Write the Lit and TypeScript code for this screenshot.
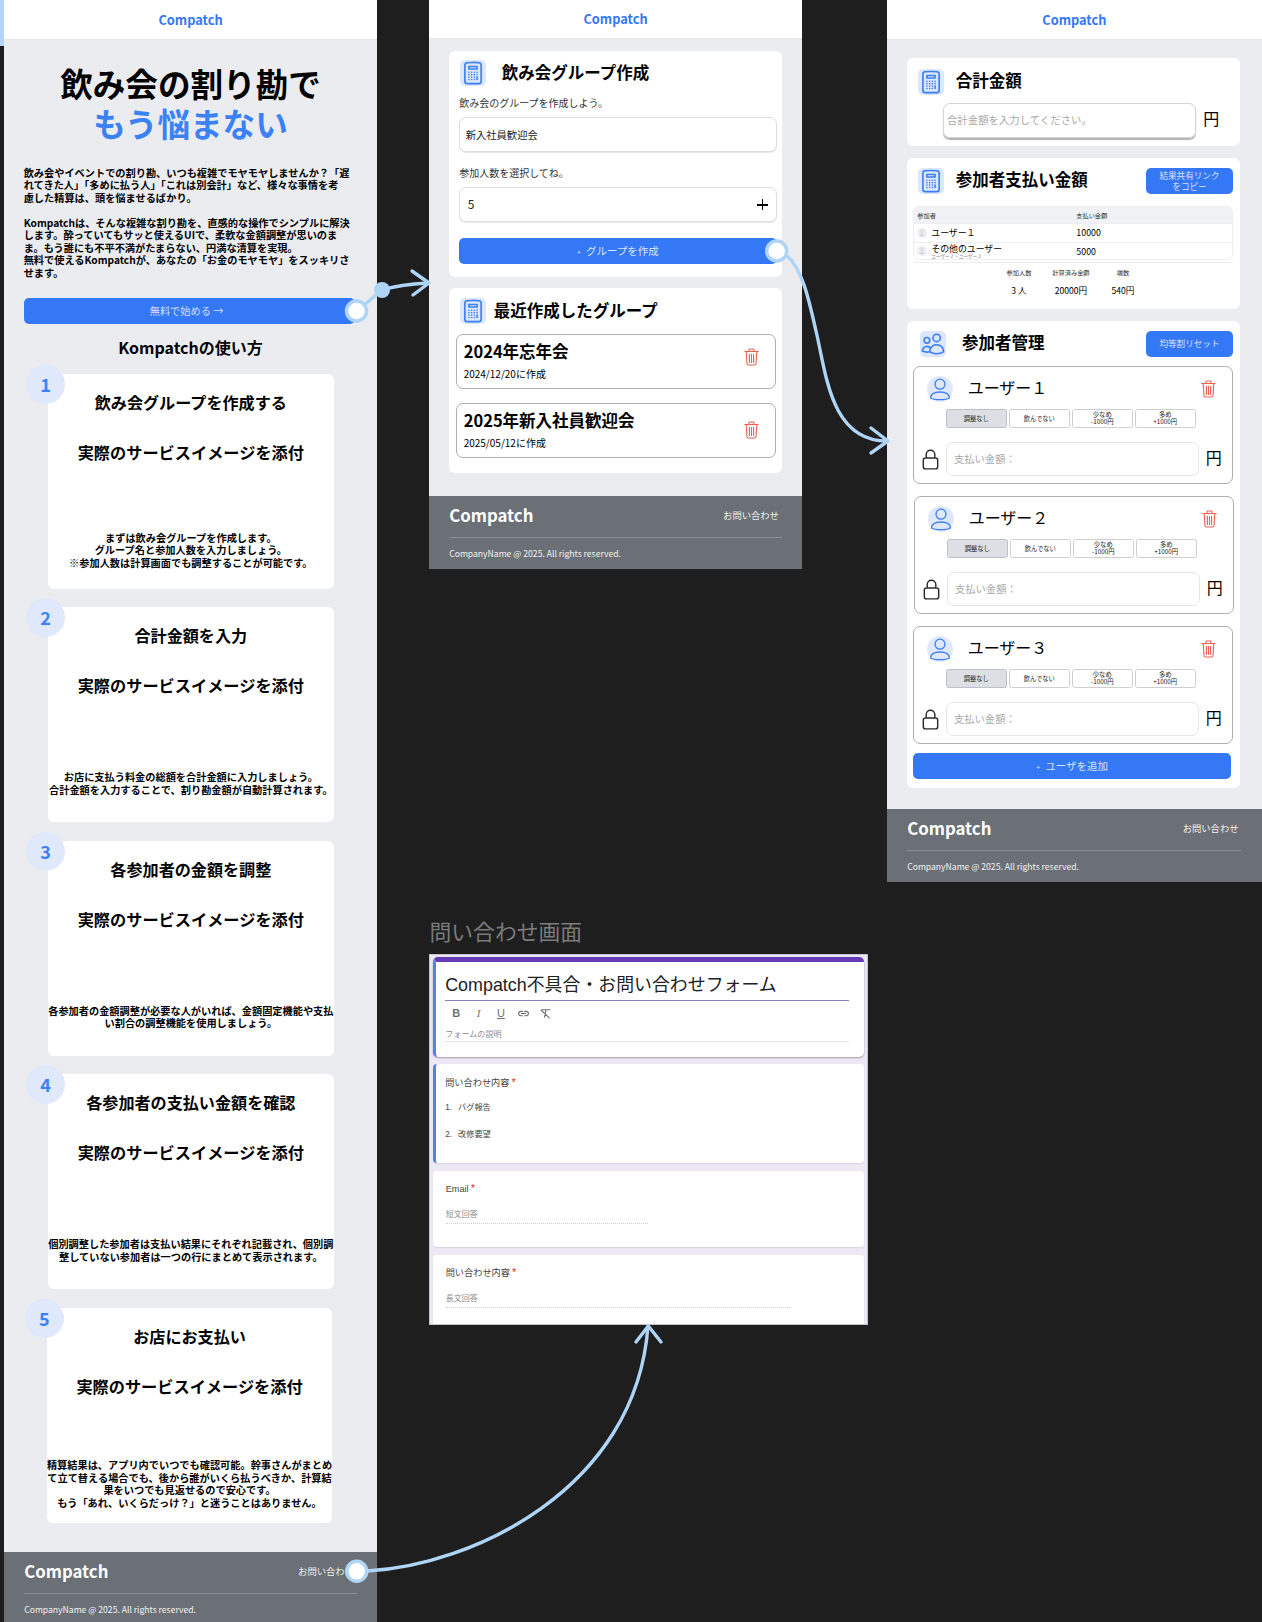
import { css, html, LitElement, svg } from "lit";
import { customElement } from "lit/decorators.js";

const STEPS = [
	{
		title: "飲み会グループを作成する",
		lines: [
			"まずは飲み会グループを作成します。",
			"グループ名と参加人数を入力しましょう。",
			"※参加人数は計算画面でも調整することが可能です。",
		],
	},
	{
		title: "合計金額を入力",
		lines: [
			"お店に支払う料金の総額を合計金額に入力しましょう。",
			"合計金額を入力することで、割り勘金額が自動計算されます。",
		],
	},
	{
		title: "各参加者の金額を調整",
		lines: [
			"各参加者の金額調整が必要な人がいれば、金額固定機能や支払",
			"い割合の調整機能を使用しましょう。",
		],
	},
	{
		title: "各参加者の支払い金額を確認",
		lines: [
			"個別調整した参加者は支払い結果にそれぞれ記載され、個別調",
			"整していない参加者は一つの行にまとめて表示されます。",
		],
	},
	{
		title: "お店にお支払い",
		lines: [
			"精算結果は、アプリ内でいつでも確認可能。幹事さんがまとめ",
			"て立て替える場合でも、後から誰がいくら払うべきか、計算結",
			"果をいつでも見返せるので安心です。",
			"もう「あれ、いくらだっけ？」と迷うことはありません。",
		],
	},
];

const USERS = ["ユーザー１", "ユーザー２", "ユーザー３"];

const calculatorIcon = svg`<svg class="icon-svg" viewBox="0 0 24 24" fill="none" stroke="#3b7df6" stroke-width="1.5" stroke-linecap="round" stroke-linejoin="round"><path d="M15.75 15.75V18m-7.5-6.75h.008v.008H8.25v-.008Zm0 2.25h.008v.008H8.25V13.5Zm0 2.25h.008v.008H8.25v-.008Zm0 2.25h.008v.008H8.25V18Zm2.498-6.75h.007v.008h-.007v-.008Zm0 2.25h.007v.008h-.007V13.5Zm0 2.25h.007v.008h-.007v-.008Zm0 2.25h.007v.008h-.007V18Zm2.504-6.75h.008v.008h-.008v-.008Zm0 2.25h.008v.008h-.008V13.5Zm0 2.25h.008v.008h-.008v-.008Zm0 2.25h.008v.008h-.008V18Zm2.498-6.75h.008v.008h-.008v-.008Zm0 2.25h.008v.008h-.008V13.5ZM8.25 6h7.5v2.25h-7.5V6ZM12 2.25c-1.892 0-3.758.11-5.593.322C5.307 2.7 4.5 3.65 4.5 4.757V19.5a2.25 2.25 0 0 0 2.25 2.25h10.5a2.25 2.25 0 0 0 2.25-2.25V4.757c0-1.108-.806-2.057-1.907-2.185A48.507 48.507 0 0 0 12 2.25Z"/></svg>`;

const peopleIcon = svg`<svg class="icon-svg" viewBox="0 0 24 24" fill="none" stroke="#3b7df6" stroke-width="1.5" stroke-linecap="round" stroke-linejoin="round"><g transform="translate(24 0) scale(-1 1)"><path d="M15 19.128a9.38 9.38 0 0 0 2.625.372 9.337 9.337 0 0 0 4.121-.952 4.125 4.125 0 0 0-7.533-2.493M15 19.128v-.003c0-1.113-.285-2.16-.786-3.07M15 19.128v.106A12.318 12.318 0 0 1 8.624 21c-2.331 0-4.512-.645-6.374-1.766l-.001-.109a6.375 6.375 0 0 1 11.964-3.07M12 6.375a3.375 3.375 0 1 1-6.75 0 3.375 3.375 0 0 1 6.75 0Zm8.25 2.25a2.625 2.625 0 1 1-5.25 0 2.625 2.625 0 0 1 5.25 0Z"/></g></svg>`;

const userIcon = svg`<svg class="icon-svg" viewBox="0 0 26 26" fill="none" stroke="#3b7df6" stroke-width="1.3" stroke-linecap="round" stroke-linejoin="round"><circle cx="13" cy="8.2" r="5"/><path d="M3.5 22C3.8 18 8 16 13 16S22.2 18 22.5 22C19 24.2 7 24.2 3.5 22Z"/></svg>`;

const tinyUserIcon = svg`<svg class="dot-svg" viewBox="0 0 10 10" fill="none" stroke="#c3c6cc" stroke-width=".6"><circle cx="5" cy="3.4" r="1.4"/><path d="M3 7.6C3 5.8 7 5.8 7 7.6Z"/></svg>`;

const trashIcon = svg`<svg class="trash" viewBox="0 0 15 18" fill="none" stroke="#ef5f54" stroke-width="1.1" stroke-linecap="round" stroke-linejoin="round"><path d="M.8 3.5h13.4M5 3.5V1.9a.9.9 0 0 1 .9-.9h3.2a.9.9 0 0 1 .9.9v1.6M2.2 3.5l.8 12.2a1.4 1.4 0 0 0 1.4 1.3h6.2a1.4 1.4 0 0 0 1.4-1.3l.8-12.2M5.4 6.2v8.2M7.5 6.2v8.2M9.6 6.2v8.2"/></svg>`;

const lockIcon = svg`<svg class="lock" viewBox="0 0 24 24" fill="none" stroke="#2b2b2b" stroke-width="1.5" stroke-linecap="round" stroke-linejoin="round"><path d="M16.5 10.5V6.75a4.5 4.5 0 1 0-9 0v3.75m-.75 11.25h10.5a2.25 2.25 0 0 0 2.25-2.25v-6.75a2.25 2.25 0 0 0-2.25-2.25H6.75a2.25 2.25 0 0 0-2.25 2.25v6.75a2.25 2.25 0 0 0 2.25 2.25Z"/></svg>`;

const linkIcon = svg`<svg class="tool-svg" viewBox="0 0 24 24" fill="none" stroke="#6f6f6f" stroke-width="2" stroke-linecap="round"><path d="M10 8H7a4 4 0 0 0 0 8h3M14 8h3a4 4 0 0 1 0 8h-3M8 12h8"/></svg>`;

const clearIcon = svg`<svg class="tool-svg" viewBox="0 0 24 24" fill="none" stroke="#6f6f6f" stroke-width="2" stroke-linecap="round"><path d="M5 5h15M13 5l-3 14M4 6l15 14"/></svg>`;

// 画面間をつなぐ矢印
const arrows = svg`<svg class="arrows" viewBox="0 0 1262 1622" fill="none" stroke="#aed4f6" stroke-width="3.4" stroke-linecap="round" stroke-linejoin="round">
	<path d="M357 311L382 290C395 286 410 284 428 283"/>
	<path d="M412 271L429 283L413 295"/>
	<circle cx="382" cy="290" r="8" fill="#aed4f6" stroke="none"/>
	<circle cx="356.5" cy="311" r="10" fill="#fff" stroke-width="3.5"/>
	<path d="M787 256C802 268 809 300 816 331C826 372 830 441 887 441"/>
	<path d="M871 428L888 441L871 453"/>
	<circle cx="776.7" cy="251" r="10" fill="#fff" stroke-width="3.5"/>
	<path d="M367 1571C470 1566 636 1490 648 1326"/>
	<path d="M636 1342L648.3 1326L661 1342"/>
	<circle cx="356.7" cy="1571.3" r="10" fill="#fff" stroke-width="3.5"/>
</svg>`;

@customElement("app-root")
export class AppRoot extends LitElement {
	static styles = css`
		:host {
			display: block;
			position: relative;
			width: 1262px;
			height: 1622px;
			overflow: hidden;
			background: #1e1e1e;
			font-family: "Noto Sans CJK JP", "Noto Sans", sans-serif;
			color: #000;
		}

		.strip {
			position: absolute;
			left: 0;
			top: 0;
			width: 3.5px;
			height: 46px;
			background: #b3d5f7;
		}

		.screen {
			position: absolute;
			top: 0;
			display: flex;
			flex-direction: column;
			background: #ebecf0;
			box-sizing: border-box;
		}

		.landing {
			left: 3.7px;
			width: 373.7px;
			height: 1625.3px;
		}

		.create {
			left: 428.7px;
			width: 373.7px;
			height: 569px;
		}

		.result {
			left: 886.7px;
			width: 375.3px;
			height: 882px;
		}

		.topbar {
			flex: none;
			height: 39px;
			line-height: 39px;
			text-align: center;
			background: #fff;
			border-bottom: 1px solid #e4e5e9;
			color: #3578f6;
			font-size: 12.8px;
			font-weight: 700;
		}

		.create .topbar {
			height: 38px;
			line-height: 37px;
		}

		.footer {
			flex: none;
			margin-top: auto;
			height: 73.3px;
			padding: 0 20.5px;
			box-sizing: border-box;
			background: #6b7076;
			color: #f2f2f2;
		}

		.footer-top {
			display: flex;
			align-items: center;
			justify-content: space-between;
			height: 41.8px;
			box-sizing: border-box;
			padding: 0 3px 2.8px 0;
			border-bottom: 1px solid #8b8f95;
		}

		.brand {
			font-size: 16.8px;
			font-weight: 700;
			color: #fff;
		}

		.footer-link {
			font-size: 9.3px;
		}

		.copy {
			font-size: 8.6px;
			line-height: 31px;
		}

		/* landing */
		.hero {
			margin: 23px 0 0;
			font-size: 32.6px;
			line-height: 40px;
			font-weight: 700;
			text-align: center;
		}

		.hero span {
			display: block;
			color: #3b82f6;
		}

		.intro {
			margin: 23.7px 20px 0;
			font-size: 10.2px;
			line-height: 12.5px;
			font-weight: 700;
			white-space: nowrap;
		}

		.cta {
			margin: 18.7px 22px 0 20px;
			height: 26px;
			line-height: 26px;
			padding-right: 6px;
			text-align: center;
			border-radius: 5px;
			background: #3578f6;
			color: rgba(255, 255, 255, 0.78);
			font-size: 10.2px;
		}

		.howto {
			margin: 11.5px 0 0;
			font-size: 16px;
			line-height: 24px;
			font-weight: 700;
			text-align: center;
		}

		.steps {
			display: flex;
			flex-direction: column;
			gap: 18.5px;
			margin-top: 14.5px;
		}

		.step {
			position: relative;
			margin-left: 44.3px;
			width: 285.7px;
			height: 215px;
			box-sizing: border-box;
			background: #fff;
			border-radius: 6px;
			text-align: center;
		}

		.step.last {
			margin-left: 43px;
		}

		.badge {
			position: absolute;
			left: -22px;
			top: -9px;
			width: 39px;
			height: 39px;
			line-height: 38px;
			border-radius: 50%;
			background: #e0e8fb;
			color: #3b82f6;
			font-size: 18px;
			font-weight: 700;
		}

		.step-title {
			margin: 0;
			padding-top: 16px;
			font-size: 16.1px;
			line-height: 24px;
			font-weight: 700;
		}

		.step-sub {
			padding-top: 26px;
			font-size: 16.2px;
			line-height: 24px;
			font-weight: 700;
		}

		.step-desc {
			display: flex;
			flex-direction: column;
			justify-content: center;
			margin-top: 51.5px;
			height: 70px;
			font-size: 10.2px;
			line-height: 12.5px;
			font-weight: 700;
			white-space: nowrap;
		}

		/* cards */
		.card {
			background: #fff;
			border-radius: 6px;
			box-sizing: border-box;
		}

		.card-head {
			display: flex;
			align-items: center;
		}

		.icon-box {
			flex: none;
			display: flex;
			align-items: center;
			justify-content: center;
			width: 26px;
			height: 26px;
			border-radius: 5px;
			background: #dbe7fd;
		}

		.icon-svg {
			display: block;
			width: 26px;
			height: 26px;
		}

		.card-title {
			margin: 0;
			padding-bottom: 3px;
			font-size: 16.5px;
			line-height: 24px;
			font-weight: 700;
		}

		.gap-8 {
			margin-left: 8px;
		}
		.gap-12 {
			margin-left: 12px;
		}
		.gap-16 {
			margin-left: 16px;
		}

		.primary {
			display: block;
			text-align: center;
			border-radius: 5px;
			background: #3578f6;
			color: rgba(255, 255, 255, 0.82);
			font-size: 10.5px;
			height: 26.4px;
			line-height: 26px;
		}

		.primary small {
			font-size: 7px;
			margin-right: 5px;
		}

		/* create */
		.create-form {
			margin: 11.7px 20.3px 0;
			height: 226px;
			padding: 9.3px 5.3px 0 10.2px;
		}

		.create-form .card-head {
			margin-left: 0.5px;
		}

		.label {
			font-size: 10px;
			line-height: 16px;
			color: #333;
		}

		.label.first {
			margin-top: 8px;
		}

		.label.second {
			margin-top: 12.8px;
		}

		.field {
			display: flex;
			align-items: center;
			justify-content: space-between;
			height: 35px;
			margin-top: 6.3px;
			padding: 0 5.5px;
			box-sizing: border-box;
			border: 1px solid #dedede;
			border-radius: 7px;
			background: #fff;
			box-shadow: 0 1px 1px rgba(0, 0, 0, 0.1);
			font-size: 10.3px;
			color: #222;
		}

		.field .count {
			font-size: 12px;
			margin: 0 0 2px 2px;
		}

		.plus {
			position: relative;
			width: 11px;
			height: 11px;
			margin-right: 2px;
		}

		.plus::before,
		.plus::after {
			content: "";
			position: absolute;
			background: #000;
		}

		.plus::before {
			left: 0;
			top: 4.8px;
			width: 11px;
			height: 1.4px;
		}

		.plus::after {
			left: 4.8px;
			top: 0;
			width: 1.4px;
			height: 11px;
		}

		.create-form .primary {
			margin-top: 15.7px;
		}

		.recent {
			margin: 11.6px 20.3px 0;
			padding: 9.7px 6.3px 16px 6.7px;
			height: 184.4px;
		}

		.recent .card-head {
			margin-left: 4px;
		}

		.group-item {
			display: flex;
			align-items: center;
			justify-content: space-between;
			height: 54.4px;
			margin-top: 9.3px;
			padding: 0 16px 0 7px;
			box-sizing: border-box;
			border: 1px solid #aeaeae;
			border-radius: 7px;
		}

		.group-item + .group-item {
			margin-top: 14.6px;
		}

		.group-name {
			font-size: 16.5px;
			line-height: 22px;
			font-weight: 700;
			margin-top: -2px;
		}

		.group-date {
			font-size: 10px;
			line-height: 14px;
			margin-top: 5.6px;
		}

		.trash {
			display: block;
			flex: none;
			width: 15px;
			height: 18px;
		}

		.up {
			display: block;
			margin-bottom: 8px;
		}

		/* result */
		.total {
			margin: 18.4px 0 0 20.6px;
			width: 332.7px;
			height: 87.7px;
			padding: 9.7px 0 0 10.4px;
		}

		.total-row {
			display: flex;
			align-items: center;
			margin: 7.6px 0 0 25.3px;
		}

		.total-input {
			width: 253px;
			height: 35.4px;
			padding-left: 3px;
			box-sizing: border-box;
			line-height: 31px;
			border: 1px solid #d4d4d4;
			border-radius: 7px;
			box-shadow: 0 1.5px 1px rgba(0, 0, 0, 0.3);
			font-size: 10.4px;
			color: #a8a8a8;
		}

		.yen {
			flex: none;
			margin: 0 0 5px 7.4px;
			font-size: 16px;
			color: #000;
		}

		.pay {
			margin: 11.9px 0 0 20.6px;
			width: 332.7px;
			height: 151px;
			padding: 9.3px 7.3px 0 6px;
		}

		.pay .card-head {
			margin-left: 4.4px;
		}

		.small-btn {
			flex: none;
			display: flex;
			align-items: center;
			justify-content: center;
			margin-left: auto;
			width: 86.4px;
			height: 26.3px;
			border-radius: 5px;
			background: #3578f6;
			color: rgba(255, 255, 255, 0.82);
			font-size: 8.6px;
			line-height: 10.6px;
			text-align: center;
		}

		.table {
			margin-top: 12.2px;
			border: 1px solid #eeeef0;
			border-radius: 6px;
			overflow: hidden;
			height: 53.3px;
			box-sizing: border-box;
		}

		.tr {
			display: grid;
			grid-template-columns: 159px 1fr;
			align-items: center;
			height: 18.6px;
			box-sizing: border-box;
			padding-left: 3px;
			font-size: 8.9px;
		}

		.tr + .tr {
			border-top: 1px solid #eeeef0;
		}

		.tr.thead {
			height: 15.5px;
			background: #f1f2f6;
			font-size: 6.2px;
			color: #333;
		}

		.who {
			display: flex;
			align-items: center;
			gap: 4px;
			line-height: 9.5px;
		}

		.dot {
			flex: none;
			width: 10px;
			height: 10px;
			border-radius: 50%;
			background: #eceef3;
		}

		.dot-svg {
			display: block;
			width: 10px;
			height: 10px;
		}

		.who small {
			display: block;
			font-size: 4.6px;
			line-height: 5px;
			color: #888;
		}

		.stats {
			display: flex;
			justify-content: center;
			margin-top: 2.4px;
			padding-top: 3px;
			border-top: 1px solid #efefef;
			text-align: center;
		}

		.stat {
			width: 52px;
			transform: translateX(-2px);
		}

		.stat-label {
			font-size: 6.2px;
			line-height: 14px;
			color: #333;
		}

		.stat-value {
			margin-top: 3px;
			font-size: 8.6px;
			line-height: 14px;
		}

		.members {
			margin: 12px 0 0 20.6px;
			width: 332.7px;
			height: 466.7px;
			padding: 9.3px 7.3px 0 6px;
		}

		.members .card-head {
			margin-left: 6.7px;
		}

		.user {
			height: 118.4px;
			box-sizing: border-box;
			margin-top: 8.8px;
			padding-top: 9px;
			border: 1px solid #aeaeae;
			border-radius: 7px;
		}

		.user + .user {
			margin-top: 11.6px;
		}

		.user.shifted {
			margin-left: 1px;
			margin-right: -1px;
		}

		.user-head {
			display: flex;
			align-items: center;
			padding: 0 16px 0 12.7px;
		}

		.avatar {
			flex: none;
			width: 26px;
			height: 26px;
			border-radius: 50%;
			background: #dfe8fb;
		}

		.user-name {
			margin-left: 14.7px;
			padding-bottom: 4px;
			font-size: 16px;
			line-height: 22px;
		}

		.user-head .trash {
			margin-left: auto;
		}

		.weights {
			display: grid;
			grid-template-columns: repeat(4, 60.6px);
			gap: 2.4px;
			margin: 6.6px 0 0 31.7px;
		}

		.weight {
			display: flex;
			align-items: center;
			justify-content: center;
			height: 19.4px;
			box-sizing: border-box;
			border: 1px solid #cfcfcf;
			border-radius: 2.5px;
			font-size: 6.3px;
			line-height: 7px;
			text-align: center;
			color: #222;
		}

		.weight.active {
			background: #dcdfe3;
			border-color: #bdc1c6;
		}

		.pay-row {
			display: flex;
			align-items: center;
			margin: 14px 0 0 5.4px;
		}

		.lock {
			flex: none;
			display: block;
			width: 23px;
			height: 23px;
			margin-left: -1px;
		}

		.pay-input {
			flex: none;
			margin-left: 4.3px;
			width: 253.3px;
			height: 34px;
			line-height: 32px;
			padding-left: 7px;
			box-sizing: border-box;
			border: 1px solid #e6e6e6;
			border-radius: 7px;
			font-size: 10.3px;
			color: #a8a8a8;
		}

		.pay-row .yen {
			margin-left: 6.4px;
		}

		.members .primary {
			margin-top: 8.6px;
			width: 317.7px;
		}

		/* inquiry form */
		.caption {
			position: absolute;
			left: 429.5px;
			top: 915px;
			font-size: 21.8px;
			line-height: 32px;
			color: #7b7b7b;
		}

		.gform {
			position: absolute;
			left: 428.7px;
			top: 954.3px;
			width: 439.5px;
			height: 371px;
			box-sizing: border-box;
			overflow: hidden;
			padding: 1.7px 0 0 3px;
			background: #ede8f6;
			border: 1px solid #c3c3c8;
			color: #444;
			font-family: "Liberation Sans", "Noto Sans CJK JP", sans-serif;
		}

		.gcard {
			width: 431.4px;
			box-sizing: border-box;
			padding: 0 15px 0 13px;
			background: #fff;
			border-radius: 4px;
			box-shadow: 0 1px 1px rgba(60, 64, 67, 0.12);
		}

		.gcard.accent {
			border-left: 3.5px solid #4f83ea;
			padding-left: 9.5px;
		}

		.g-title {
			height: 100px;
			border-top: 5.5px solid #673ab7;
			border-radius: 5px;
			box-shadow: 0 1px 2px rgba(60, 64, 67, 0.45);
			padding-top: 10.5px;
		}

		.g-heading {
			font-size: 17.9px;
			line-height: 26px;
			padding-bottom: 2px;
			border-bottom: 1.3px solid #8e7cc3;
			color: #202124;
		}

		.toolbar {
			display: flex;
			height: 20px;
			margin-top: 2px;
			color: #6f6f6f;
			font-size: 11px;
			line-height: 20px;
		}

		.tool {
			display: flex;
			align-items: center;
			justify-content: center;
			width: 22.3px;
		}

		.tool.b {
			font-weight: 700;
		}
		.tool.i {
			font-style: italic;
			font-family: "Liberation Serif", serif;
		}
		.tool.u {
			text-decoration: underline;
		}

		.tool-svg {
			width: 13px;
			height: 13px;
		}

		.g-desc {
			margin-top: 6px;
			font-size: 8.1px;
			line-height: 12px;
			color: #8a8a8a;
			border-bottom: 1px solid #e3e3e3;
		}

		.g-choice {
			height: 99.6px;
			margin-top: 6.7px;
			padding-top: 12px;
		}

		.g-q {
			font-size: 9.2px;
			line-height: 14px;
			color: #444;
		}

		.g-q em {
			font-style: normal;
			font-size: 11px;
			line-height: 0;
			color: #d93025;
			margin-left: 2px;
		}

		.g-opt {
			display: flex;
			gap: 6px;
			font-size: 8.2px;
			line-height: 12px;
			margin-top: 15px;
		}

		.g-q + .g-opt {
			margin-top: 12.3px;
		}

		.g-plain {
			height: 75.7px;
			margin-top: 7.7px;
			padding-top: 11.3px;
		}

		.g-plain + .g-plain {
			height: 90px;
			margin-top: 8.3px;
		}

		.g-hint {
			margin-top: 12.7px;
			padding-bottom: 2px;
			font-size: 8px;
			line-height: 12px;
			color: #8a8a8a;
			border-bottom: 1px dotted #cfcfcf;
		}

		.g-hint.short {
			width: 202px;
		}

		.g-hint.long {
			width: 344px;
		}

		.arrows {
			position: absolute;
			left: 0;
			top: 0;
			width: 1262px;
			height: 1622px;
			pointer-events: none;
		}
	`;

	private renderHeader() {
		return html`<div class="topbar">Compatch</div>`;
	}

	private renderFooter() {
		return html`
			<div class="footer">
				<div class="footer-top">
					<span class="brand">Compatch</span>
					<span class="footer-link">お問い合わせ</span>
				</div>
				<div class="copy">CompanyName @ 2025. All rights reserved.</div>
			</div>
		`;
	}

	private renderLanding() {
		return html`
			<section class="screen landing">
				${this.renderHeader()}
				<h1 class="hero">飲み会の割り勘で<span>もう悩まない</span></h1>
				<div class="intro">
					飲み会やイベントでの割り勘、いつも複雑でモヤモヤしませんか？「遅<br />
					れてきた人」「多めに払う人」「これは別会計」など、様々な事情を考<br />
					慮した精算は、頭を悩ませるばかり。<br />
					<br />
					Kompatchは、そんな複雑な割り勘を、直感的な操作でシンプルに解決<br />
					します。酔っていてもサッと使えるUIで、柔軟な金額調整が思いのま<br />
					ま。もう誰にも不平不満がたまらない、円満な清算を実現。<br />
					無料で使えるKompatchが、あなたの「お金のモヤモヤ」をスッキリさ<br />
					せます。
				</div>
				<div class="cta">無料で始める →</div>
				<h2 class="howto">Kompatchの使い方</h2>
				<div class="steps">
					${STEPS.map(
						(step, index) => html`
							<div class="step ${index === STEPS.length - 1 ? "last" : ""}">
								<div class="badge">${index + 1}</div>
								<h3 class="step-title">${step.title}</h3>
								<div class="step-sub">実際のサービスイメージを添付</div>
								<div class="step-desc">
									${step.lines.map((line) => html`<div>${line}</div>`)}
								</div>
							</div>
						`,
					)}
				</div>
				${this.renderFooter()}
			</section>
		`;
	}

	private renderCreate() {
		return html`
			<section class="screen create">
				${this.renderHeader()}
				<div class="card create-form">
					<div class="card-head">
						<div class="icon-box">${calculatorIcon}</div>
						<h2 class="card-title gap-16">飲み会グループ作成</h2>
					</div>
					<div class="label first">飲み会のグループを作成しよう。</div>
					<div class="field">新入社員歓迎会</div>
					<div class="label second">参加人数を選択してね。</div>
					<div class="field">
						<span class="count">5</span>
						<span class="plus"></span>
					</div>
					<div class="primary"><small>+</small>グループを作成</div>
				</div>
				<div class="card recent">
					<div class="card-head">
						<div class="icon-box">${calculatorIcon}</div>
						<h2 class="card-title gap-8">最近作成したグループ</h2>
					</div>
					<div class="group-item">
						<div>
							<div class="group-name">2024年忘年会</div>
							<div class="group-date">2024/12/20に作成</div>
						</div>
						<span class="up">${trashIcon}</span>
					</div>
					<div class="group-item">
						<div>
							<div class="group-name">2025年新入社員歓迎会</div>
							<div class="group-date">2025/05/12に作成</div>
						</div>
						${trashIcon}
					</div>
				</div>
				${this.renderFooter()}
			</section>
		`;
	}

	private renderUser(name: string, index: number) {
		return html`
			<div class="user ${index === 1 ? "shifted" : ""}">
				<div class="user-head">
					<div class="avatar">${userIcon}</div>
					<div class="user-name">${name}</div>
					${trashIcon}
				</div>
				<div class="weights">
					<div class="weight active">調整なし</div>
					<div class="weight">飲んでない</div>
					<div class="weight">少なめ<br />-1000円</div>
					<div class="weight">多め<br />+1000円</div>
				</div>
				<div class="pay-row">
					${lockIcon}
					<div class="pay-input">支払い金額：</div>
					<span class="yen">円</span>
				</div>
			</div>
		`;
	}

	private renderResult() {
		return html`
			<section class="screen result">
				${this.renderHeader()}
				<div class="card total">
					<div class="card-head">
						<div class="icon-box">${calculatorIcon}</div>
						<h2 class="card-title gap-12">合計金額</h2>
					</div>
					<div class="total-row">
						<div class="total-input">合計金額を入力してください。</div>
						<span class="yen">円</span>
					</div>
				</div>
				<div class="card pay">
					<div class="card-head">
						<div class="icon-box">${calculatorIcon}</div>
						<h2 class="card-title gap-12">参加者支払い金額</h2>
						<div class="small-btn">結果共有リンク<br />をコピー</div>
					</div>
					<div class="table">
						<div class="tr thead"><span>参加者</span><span>支払い金額</span></div>
						<div class="tr">
							<div class="who"><span class="dot">${tinyUserIcon}</span>ユーザー１</div>
							<span>10000</span>
						</div>
						<div class="tr">
							<div class="who">
								<span class="dot">${tinyUserIcon}</span>
								<div>その他のユーザー<small>ユーザー２・ユーザー３</small></div>
							</div>
							<span>5000</span>
						</div>
					</div>
					<div class="stats">
						<div class="stat">
							<div class="stat-label">参加人数</div>
							<div class="stat-value">3 人</div>
						</div>
						<div class="stat">
							<div class="stat-label">計算済み金額</div>
							<div class="stat-value">20000円</div>
						</div>
						<div class="stat">
							<div class="stat-label">端数</div>
							<div class="stat-value">540円</div>
						</div>
					</div>
				</div>
				<div class="card members">
					<div class="card-head">
						<div class="icon-box">${peopleIcon}</div>
						<h2 class="card-title gap-16">参加者管理</h2>
						<div class="small-btn">均等割リセット</div>
					</div>
					${USERS.map((name, index) => this.renderUser(name, index))}
					<div class="primary"><small>+</small>ユーザを追加</div>
				</div>
				${this.renderFooter()}
			</section>
		`;
	}

	private renderInquiry() {
		return html`
			<div class="caption">問い合わせ画面</div>
			<section class="gform">
				<div class="gcard accent g-title">
					<div class="g-heading">Compatch不具合・お問い合わせフォーム</div>
					<div class="toolbar">
						<span class="tool b">B</span>
						<span class="tool i">I</span>
						<span class="tool u">U</span>
						<span class="tool">${linkIcon}</span>
						<span class="tool">${clearIcon}</span>
					</div>
					<div class="g-desc">フォームの説明</div>
				</div>
				<div class="gcard accent g-choice">
					<div class="g-q">問い合わせ内容<em>*</em></div>
					<div class="g-opt"><span>1.</span><span>バグ報告</span></div>
					<div class="g-opt"><span>2.</span><span>改修要望</span></div>
				</div>
				<div class="gcard g-plain">
					<div class="g-q">Email<em>*</em></div>
					<div class="g-hint short">短文回答</div>
				</div>
				<div class="gcard g-plain">
					<div class="g-q">問い合わせ内容<em>*</em></div>
					<div class="g-hint long">長文回答</div>
				</div>
			</section>
		`;
	}

	protected render() {
		return html`
			<div class="strip"></div>
			${this.renderLanding()} ${this.renderCreate()} ${this.renderResult()}
			${this.renderInquiry()} ${arrows}
		`;
	}
}
